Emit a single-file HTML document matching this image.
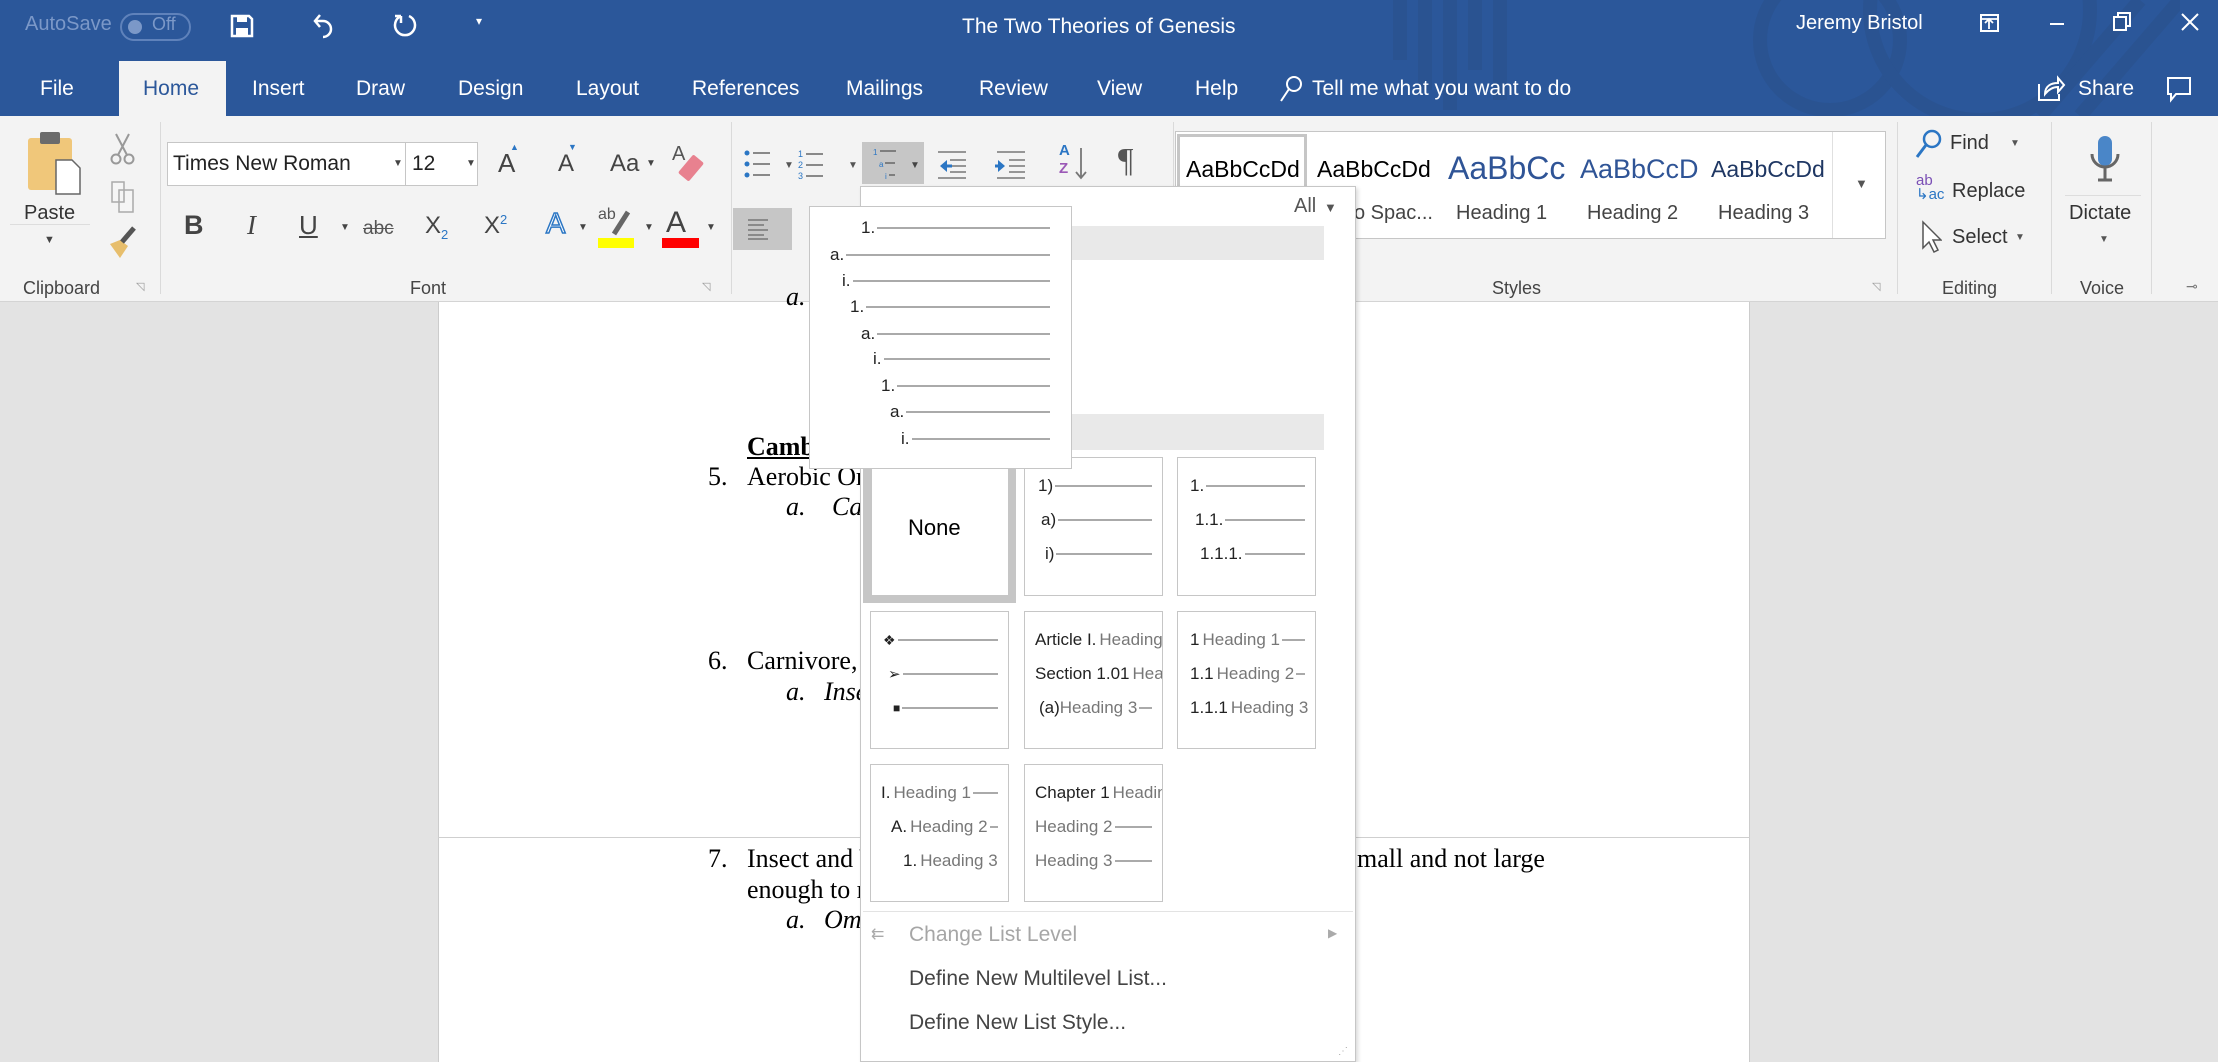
<!DOCTYPE html>
<html><head><meta charset="utf-8"><style>
*{margin:0;padding:0;box-sizing:border-box}
body{width:2218px;height:1062px;overflow:hidden;position:relative;background:#e3e3e3;font-family:"Liberation Sans",sans-serif}
.a{position:absolute;white-space:nowrap}
.tb{color:#fff;font-size:21px}
.rb{color:#333;font-size:20px}
.gl{color:#444;font-size:18px}
.tr{font-family:"Liberation Serif",serif;font-size:26px;color:#000}
.cell{position:absolute;background:#fff;border:1px solid #c6c6c6;overflow:hidden}
.ln{position:absolute;display:flex;align-items:center;font-size:17px;color:#222;right:10px;height:22px;white-space:nowrap}
.ln i{font-style:normal;flex-shrink:0}
.ln b{flex:1;border-bottom:2px solid #aaa;height:0;margin-left:2px;font-weight:normal;min-width:4px}
.g{color:#777}
.sep{position:absolute;top:122px;width:1px;height:172px;background:#dadada}
</style></head><body>
<!-- title bar -->
<div class="a" style="left:0;top:0;width:2218px;height:116px;background:#2b579a"></div>
<svg class="a" style="left:1380px;top:0" width="800" height="116"><g fill="none" stroke="#2a5391" stroke-width="14"><path d="M20 0v60M45 0v90M70 0v110M95 0v70M120 0v100"/><circle cx="450" cy="40" r="70"/><circle cx="600" cy="10" r="110"/><path d="M660 116L760 0M700 116L800 0"/></g></svg>
<div class="a" style="left:25px;top:13px;font-size:20px;color:#7b98c8">AutoSave</div>
<div class="a" style="left:120px;top:13px;width:71px;height:28px;border:2px solid #5f82bb;border-radius:14px"></div>
<div class="a" style="left:128px;top:20px;width:14px;height:14px;border-radius:7px;background:#7b98c8"></div>
<div class="a" style="left:152px;top:14px;font-size:18px;color:#7b98c8">Off</div>
<svg class="a" style="left:230px;top:14px" width="24" height="24"><path d="M2 2h17l3 3v17H2z" fill="none" stroke="#fff" stroke-width="2.5"/><rect x="6" y="14" width="12" height="8" fill="#fff"/><rect x="7" y="2" width="10" height="6" fill="#fff"/></svg>
<svg class="a" style="left:312px;top:12px" width="24" height="28"><path d="M8 3L3 9l5 6M3 9h8a8 8 0 0 1 0 16" fill="none" stroke="#fff" stroke-width="2.5"/></svg>
<svg class="a" style="left:392px;top:12px" width="26" height="28"><path d="M9 4a10 10 0 1 0 8 0M9 4v7M9 4H3" fill="none" stroke="#fff" stroke-width="2.5"/></svg>
<div class="a" style="left:476px;top:14px;font-size:12px;color:#fff">▾</div>
<div class="a tb" style="left:962px;top:15px">The Two Theories of Genesis</div>
<div class="a tb" style="left:1796px;top:12px;font-size:20px">Jeremy Bristol</div>
<svg class="a" style="left:1978px;top:12px" width="120" height="24"><rect x="3" y="3" width="17" height="16" fill="none" stroke="#fff" stroke-width="2"/><path d="M11 17V7M7 11l4-4 4 4M3 7h17" fill="none" stroke="#fff" stroke-width="1.8"/><path d="M72 12h14" stroke="#fff" stroke-width="2"/></svg>
<svg class="a" style="left:2110px;top:10px" width="100" height="26"><rect x="4" y="7" width="12" height="13" fill="none" stroke="#fff" stroke-width="2"/><path d="M8 7V3h12v13h-4" fill="none" stroke="#fff" stroke-width="2"/><path d="M72 4l16 16M88 4L72 20" stroke="#fff" stroke-width="2"/></svg>
<!-- tabs -->
<div class="a" style="left:119px;top:61px;width:107px;height:56px;background:#f3f3f3"></div>
<div class="a tb" style="left:40px;top:77px">File</div>
<div class="a tb" style="left:143px;top:77px;color:#2b579a">Home</div>
<div class="a tb" style="left:252px;top:77px">Insert</div>
<div class="a tb" style="left:356px;top:77px">Draw</div>
<div class="a tb" style="left:458px;top:77px">Design</div>
<div class="a tb" style="left:576px;top:77px">Layout</div>
<div class="a tb" style="left:692px;top:77px">References</div>
<div class="a tb" style="left:846px;top:77px">Mailings</div>
<div class="a tb" style="left:979px;top:77px">Review</div>
<div class="a tb" style="left:1097px;top:77px">View</div>
<div class="a tb" style="left:1195px;top:77px">Help</div>
<svg class="a" style="left:1278px;top:74px" width="26" height="30"><circle cx="16" cy="10" r="7" fill="none" stroke="#fff" stroke-width="2"/><path d="M11 15L3 27" stroke="#fff" stroke-width="2"/></svg>
<div class="a tb" style="left:1312px;top:77px">Tell me what you want to do</div>
<svg class="a" style="left:2036px;top:74px" width="30" height="30"><path d="M3 10v16h20v-6" fill="none" stroke="#fff" stroke-width="2"/><path d="M9 20c0-8 6-11 13-11V4l6 7-6 7v-5c-5 0-9 2-13 7z" fill="none" stroke="#fff" stroke-width="2"/></svg>
<div class="a tb" style="left:2078px;top:77px">Share</div>
<svg class="a" style="left:2166px;top:76px" width="26" height="28"><path d="M2 2h22v16H10l-5 6v-6H2z" fill="none" stroke="#fff" stroke-width="2"/></svg>
<!-- ribbon -->
<div class="a" style="left:0;top:116px;width:2218px;height:186px;background:#f3f3f3;border-bottom:1px solid #d4d4d4"></div>
<div class="sep" style="left:160px"></div><div class="sep" style="left:731px"></div><div class="sep" style="left:1173px"></div><div class="sep" style="left:1897px"></div><div class="sep" style="left:2051px"></div><div class="sep" style="left:2151px"></div>
<!-- clipboard -->
<svg class="a" style="left:26px;top:130px" width="58" height="66"><rect x="2" y="8" width="44" height="52" rx="3" fill="#f0c77a"/><rect x="14" y="2" width="20" height="12" rx="2" fill="#6b6b6b"/><path d="M30 30h16l8 8v26H30z" fill="#fff" stroke="#666" stroke-width="1.5"/></svg>
<div class="a" style="left:10px;top:224px;width:80px;height:1px;background:#ddd"></div>
<div class="a rb" style="left:24px;top:202px">Paste</div>
<div class="a" style="left:44px;top:234px;font-size:11px;color:#444">▼</div>
<svg class="a" style="left:110px;top:132px" width="26" height="34"><circle cx="6" cy="27" r="4.5" fill="none" stroke="#999" stroke-width="2"/><circle cx="19" cy="27" r="4.5" fill="none" stroke="#999" stroke-width="2"/><path d="M8 23L19 2M17 23L6 2" stroke="#999" stroke-width="2"/></svg>
<svg class="a" style="left:110px;top:180px" width="26" height="34"><path d="M2 2h12v20H2zM9 10h14v22H9z" fill="#f5f5f5" stroke="#aaa" stroke-width="1.5"/></svg>
<svg class="a" style="left:108px;top:226px" width="30" height="34"><path d="M2 18l10 14 8-12-8-6z" fill="#e7be6c"/><path d="M14 16l12-14" stroke="#555" stroke-width="5"/></svg>
<div class="a gl" style="left:23px;top:278px">Clipboard</div>
<div class="a" style="left:136px;top:280px;font-size:11px;color:#999">◹</div>
<!-- font -->
<div class="a" style="left:167px;top:142px;width:239px;height:44px;background:#fff;border:1px solid #c6c6c6"></div>
<div class="a" style="left:406px;top:142px;width:72px;height:44px;background:#fff;border:1px solid #c6c6c6;border-left:none"></div>
<div class="a" style="left:173px;top:152px;font-size:21px;color:#222">Times New Roman</div>
<div class="a" style="left:393px;top:158px;font-size:10px;color:#444">▼</div>
<div class="a" style="left:412px;top:152px;font-size:21px;color:#222">12</div>
<div class="a" style="left:466px;top:158px;font-size:10px;color:#444">▼</div>
<div class="a" style="left:498px;top:148px;font-size:26px;color:#444">A</div><div class="a" style="left:510px;top:142px;font-size:9px;color:#2b76c4">▲</div>
<div class="a" style="left:558px;top:150px;font-size:24px;color:#444">A</div><div class="a" style="left:568px;top:142px;font-size:9px;color:#2b76c4">▼</div>
<div class="a" style="left:610px;top:150px;font-size:24px;color:#444">Aa</div><div class="a" style="left:646px;top:158px;font-size:10px;color:#444">▼</div>
<svg class="a" style="left:672px;top:142px" width="34" height="44"><text x="0" y="18" font-size="20" fill="#555" font-family="Liberation Sans">A</text><rect x="12" y="14" width="14" height="24" rx="2" transform="rotate(40 19 26)" fill="#e8818f"/></svg>
<div class="a" style="left:184px;top:210px;font-size:27px;font-weight:bold;color:#444">B</div>
<div class="a" style="left:247px;top:210px;font-size:27px;font-style:italic;font-family:'Liberation Serif',serif;color:#444">I</div>
<div class="a" style="left:299px;top:210px;font-size:26px;color:#444;text-decoration:underline">U</div><div class="a" style="left:340px;top:222px;font-size:10px;color:#444">▼</div>
<div class="a" style="left:363px;top:218px;font-size:19px;color:#555;text-decoration:line-through">abc</div>
<div class="a" style="left:425px;top:212px;font-size:24px;color:#444">X<sub style="font-size:13px;color:#2b76c4">2</sub></div>
<div class="a" style="left:484px;top:212px;font-size:24px;color:#444">X<sup style="font-size:13px;color:#2b76c4">2</sup></div>
<div class="a" style="left:546px;top:208px;font-size:29px;color:#fff;-webkit-text-stroke:1.5px #2b76c4">A</div><div class="a" style="left:578px;top:222px;font-size:10px;color:#444">▼</div>
<div class="a" style="left:598px;top:206px;font-size:16px;color:#555">ab</div>
<svg class="a" style="left:608px;top:208px" width="24" height="30"><path d="M6 26L20 4" stroke="#666" stroke-width="5"/></svg>
<div class="a" style="left:598px;top:238px;width:36px;height:10px;background:#ffff00"></div><div class="a" style="left:644px;top:222px;font-size:10px;color:#444">▼</div>
<div class="a" style="left:666px;top:206px;font-size:30px;color:#444">A</div>
<div class="a" style="left:662px;top:238px;width:37px;height:10px;background:#f00"></div><div class="a" style="left:706px;top:222px;font-size:10px;color:#444">▼</div>
<div class="a gl" style="left:410px;top:278px">Font</div>
<div class="a" style="left:702px;top:280px;font-size:11px;color:#999">◹</div>
<!-- paragraph -->
<svg class="a" style="left:742px;top:148px" width="110" height="34"><g fill="#2b76c4"><circle cx="5" cy="5" r="2.5"/><circle cx="5" cy="16" r="2.5"/><circle cx="5" cy="27" r="2.5"/></g><path d="M11 5h17M11 16h17M11 27h17" stroke="#666" stroke-width="1.5"/><text x="56" y="9" font-size="9" fill="#2b76c4" font-family="Liberation Sans">1</text><text x="56" y="20" font-size="9" fill="#2b76c4" font-family="Liberation Sans">2</text><text x="56" y="31" font-size="9" fill="#2b76c4" font-family="Liberation Sans">3</text><path d="M64 6h17M64 17h17M64 28h17" stroke="#666" stroke-width="1.5"/></svg>
<div class="a" style="left:784px;top:160px;font-size:10px;color:#555">▼</div>
<div class="a" style="left:848px;top:160px;font-size:10px;color:#555">▼</div>
<div class="a" style="left:862px;top:142px;width:62px;height:42px;background:#c6c6c6"></div>
<svg class="a" style="left:870px;top:146px" width="36" height="36"><text x="3" y="9" font-size="8" fill="#2b76c4" font-family="Liberation Sans">1</text><text x="9" y="21" font-size="8" fill="#2b76c4" font-family="Liberation Sans">a</text><text x="15" y="33" font-size="8" fill="#2b76c4" font-family="Liberation Sans">i</text><path d="M10 5h16M15 17h10M19 29h6" stroke="#666" stroke-width="1.5"/></svg>
<div class="a" style="left:910px;top:160px;font-size:10px;color:#444">▼</div>
<svg class="a" style="left:938px;top:150px" width="110" height="30"><path d="M0 2h28M12 10h16M12 16h16M12 22h16M0 28h28" stroke="#777" stroke-width="1.5"/><path d="M2 16l7-6v12z" fill="#2b76c4"/><path d="M9 16h5" stroke="#2b76c4" stroke-width="3"/><path d="M59 2h28M71 10h16M71 16h16M71 22h16M59 28h28" stroke="#777" stroke-width="1.5"/><path d="M67 16l-7-6v12z" fill="#2b76c4"/><path d="M57 16h5" stroke="#2b76c4" stroke-width="3"/></svg>
<div class="a" style="left:1059px;top:142px;font-size:15px;color:#2b76c4;font-weight:bold">A</div><div class="a" style="left:1059px;top:160px;font-size:15px;color:#9b59b6;font-weight:bold">Z</div>
<svg class="a" style="left:1074px;top:146px" width="14" height="36"><path d="M7 2v30M2 26l5 6 5-6" fill="none" stroke="#777" stroke-width="1.8"/></svg>
<div class="a" style="left:1118px;top:142px;font-size:34px;color:#555;font-family:'Liberation Serif',serif">¶</div>
<div class="a" style="left:733px;top:208px;width:59px;height:42px;background:#c6c6c6"></div>
<svg class="a" style="left:748px;top:218px" width="30" height="22"><path d="M0 2h20M0 7h16M0 12h20M0 17h16M0 21h20" stroke="#666" stroke-width="1.3"/></svg>
<!-- styles -->
<div class="a" style="left:1175px;top:131px;width:711px;height:108px;background:#fff;border:1px solid #c6c6c6"></div>
<div class="a" style="left:1177px;top:134px;width:130px;height:104px;border:3px solid #c6c6c6;border-bottom:none"></div>
<div class="a" style="left:1832px;top:132px;width:1px;height:106px;background:#e0e0e0"></div>
<div class="a" style="left:1855px;top:176px;font-size:13px;color:#555">▼</div>
<div class="a" style="left:1186px;top:156px;font-size:23px;color:#000">AaBbCcDd</div>
<div class="a" style="left:1317px;top:156px;font-size:23px;color:#000">AaBbCcDd</div>
<div class="a" style="left:1448px;top:150px;font-size:32px;color:#2f5496;width:126px;overflow:hidden">AaBbCc</div>
<div class="a" style="left:1580px;top:154px;font-size:27px;color:#2f5496;width:124px;overflow:hidden">AaBbCcD</div>
<div class="a" style="left:1711px;top:156px;font-size:23px;color:#1f3763;width:118px;overflow:hidden">AaBbCcDd</div>
<div class="a" style="left:1354px;top:202px;font-size:20px;color:#444">o Spac...</div>
<div class="a" style="left:1456px;top:202px;font-size:20px;color:#444">Heading 1</div>
<div class="a" style="left:1587px;top:202px;font-size:20px;color:#444">Heading 2</div>
<div class="a" style="left:1718px;top:202px;font-size:20px;color:#444">Heading 3</div>
<div class="a gl" style="left:1492px;top:278px">Styles</div>
<div class="a" style="left:1872px;top:280px;font-size:11px;color:#999">◹</div>
<!-- editing -->
<svg class="a" style="left:1914px;top:128px" width="30" height="32"><circle cx="18" cy="11" r="8" fill="none" stroke="#2b76c4" stroke-width="2.5"/><path d="M12 17L3 29" stroke="#2b76c4" stroke-width="3"/></svg>
<div class="a rb" style="left:1950px;top:132px">Find</div><div class="a" style="left:2010px;top:138px;font-size:10px;color:#555">▼</div>
<div class="a" style="left:1916px;top:174px;font-size:15px;color:#7a4fb5;line-height:14px">ab<br><span style="color:#2b76c4">↳ac</span></div>
<div class="a rb" style="left:1952px;top:180px">Replace</div>
<svg class="a" style="left:1920px;top:220px" width="22" height="34"><path d="M3 2v26l6-6 5 10 4-2-5-10h8z" fill="#fff" stroke="#555" stroke-width="1.5"/></svg>
<div class="a rb" style="left:1952px;top:226px">Select</div><div class="a" style="left:2015px;top:232px;font-size:10px;color:#555">▼</div>
<div class="a gl" style="left:1942px;top:278px">Editing</div>
<!-- voice -->
<svg class="a" style="left:2088px;top:134px" width="34" height="54"><rect x="10" y="2" width="14" height="30" rx="7" fill="#4a86c8"/><path d="M4 20a13 13 0 0 0 26 0M17 33v12M10 46h14" fill="none" stroke="#666" stroke-width="3"/></svg>
<div class="a" style="left:2065px;top:195px;width:76px;height:1px;background:#ddd"></div>
<div class="a rb" style="left:2069px;top:202px">Dictate</div>
<div class="a" style="left:2099px;top:234px;font-size:10px;color:#555">▼</div>
<div class="a gl" style="left:2080px;top:278px">Voice</div>
<div class="a" style="left:2186px;top:278px;font-size:14px;color:#777">⊸</div>
<!-- document -->
<div class="a" style="left:438px;top:302px;width:1312px;height:760px;background:#fff;border-left:1px solid #ccc;border-right:1px solid #ccc"></div>
<div class="a" style="left:438px;top:837px;width:1312px;height:1px;background:#cfcfcf"></div>
<div class="a tr" style="left:786px;top:282px;font-style:italic">a.</div>
<div class="a tr" style="left:747px;top:432px;font-weight:bold;text-decoration:underline">Cambrian</div>
<div class="a tr" style="left:708px;top:462px">5.</div><div class="a tr" style="left:747px;top:462px">Aerobic Organisms</div>
<div class="a tr" style="left:786px;top:492px;font-style:italic">a.</div><div class="a tr" style="left:832px;top:492px;font-style:italic">Carnivores</div>
<div class="a tr" style="left:708px;top:646px">6.</div><div class="a tr" style="left:747px;top:646px">Carnivore, and more</div>
<div class="a tr" style="left:786px;top:677px;font-style:italic">a.</div><div class="a tr" style="left:824px;top:677px;font-style:italic">Insects</div>
<div class="a tr" style="left:708px;top:844px">7.</div><div class="a tr" style="left:747px;top:844px">Insect and Vertebrates were small and not large</div>
<div class="a tr" style="left:1357px;top:844px;background:#fff">mall and not large</div>
<div class="a tr" style="left:747px;top:875px">enough to reach</div>
<div class="a tr" style="left:786px;top:905px;font-style:italic">a.</div><div class="a tr" style="left:824px;top:905px;font-style:italic">Omnivores</div>
<!-- dropdown panel -->
<div class="a" style="left:860px;top:186px;width:496px;height:876px;background:#fff;border:1px solid #c6c6c6;box-shadow:2px 2px 4px rgba(0,0,0,.15)"></div>
<div class="a" style="left:1294px;top:195px;font-size:20px;color:#555">All</div><div class="a" style="left:1324px;top:200px;font-size:13px;color:#555">▼</div>
<div class="a" style="left:863px;top:226px;width:461px;height:34px;background:#e9e9e9"></div>
<div class="a" style="left:863px;top:414px;width:461px;height:36px;background:#e9e9e9"></div>
<div class="a" style="left:863px;top:460px;width:153px;height:143px;background:#c6c6c6"></div>
<div class="cell" style="left:871px;top:464px;width:138px;height:132px"><div class="a" style="left:36px;top:50px;font-size:22px;color:#000">None</div></div>
<div class="cell" style="left:1024px;top:457px;width:139px;height:139px">
<div class="ln" style="left:13px;top:17px"><i>1)</i><b></b></div>
<div class="ln" style="left:16px;top:51px"><i>a)</i><b></b></div>
<div class="ln" style="left:20px;top:85px"><i>i)</i><b></b></div></div>
<div class="cell" style="left:1177px;top:457px;width:139px;height:139px">
<div class="ln" style="left:12px;top:17px"><i>1.</i><b></b></div>
<div class="ln" style="left:17px;top:51px"><i>1.1.</i><b></b></div>
<div class="ln" style="left:22px;top:85px"><i>1.1.1.</i><b></b></div></div>
<div class="cell" style="left:870px;top:611px;width:139px;height:138px">
<div class="ln" style="left:12px;top:17px"><i style="font-size:14px">❖</i><b></b></div>
<div class="ln" style="left:17px;top:51px"><i style="font-size:15px">➢</i><b></b></div>
<div class="ln" style="left:22px;top:85px"><i style="font-size:12px">■</i><b></b></div></div>
<div class="cell" style="left:1024px;top:611px;width:139px;height:138px">
<div class="ln" style="left:10px;top:17px;right:auto"><i>Article I.</i><i class="g" style="margin-left:3px">Heading</i></div>
<div class="ln" style="left:10px;top:51px;right:auto"><i>Section 1.01</i><i class="g" style="margin-left:3px">Heading</i></div>
<div class="ln" style="left:14px;top:85px"><i>(a)</i><i class="g">Heading 3</i><b></b></div></div>
<div class="cell" style="left:1177px;top:611px;width:139px;height:138px">
<div class="ln" style="left:12px;top:17px"><i>1</i><i class="g" style="margin-left:3px">Heading 1</i><b></b></div>
<div class="ln" style="left:12px;top:51px"><i>1.1</i><i class="g" style="margin-left:3px">Heading 2</i><b></b></div>
<div class="ln" style="left:12px;top:85px;right:auto"><i>1.1.1</i><i class="g" style="margin-left:3px">Heading 3</i></div></div>
<div class="cell" style="left:870px;top:764px;width:139px;height:138px">
<div class="ln" style="left:10px;top:17px"><i>I.</i><i class="g" style="margin-left:3px">Heading 1</i><b></b></div>
<div class="ln" style="left:20px;top:51px"><i>A.</i><i class="g" style="margin-left:3px">Heading 2</i><b></b></div>
<div class="ln" style="left:32px;top:85px;right:auto"><i>1.</i><i class="g" style="margin-left:3px">Heading 3</i></div></div>
<div class="cell" style="left:1024px;top:764px;width:139px;height:138px">
<div class="ln" style="left:10px;top:17px;right:auto"><i>Chapter 1</i><i class="g" style="margin-left:3px">Heading</i></div>
<div class="ln" style="left:10px;top:51px"><i class="g">Heading 2</i><b></b></div>
<div class="ln" style="left:10px;top:85px"><i class="g">Heading 3</i><b></b></div></div>
<div class="a" style="left:863px;top:911px;width:490px;height:1px;background:#e3e3e3"></div>
<div class="a" style="left:871px;top:924px;font-size:16px;color:#aaa">⇇</div>
<div class="a" style="left:909px;top:923px;font-size:21px;color:#a6a6a6">Change List Level</div>
<div class="a" style="left:1328px;top:926px;font-size:12px;color:#aaa">▶</div>
<div class="a" style="left:909px;top:967px;font-size:21px;color:#444">Define New Multilevel List...</div>
<div class="a" style="left:909px;top:1011px;font-size:21px;color:#444">Define New List Style...</div>
<div class="a" style="left:1338px;top:1046px;font-size:10px;color:#aaa">⋰</div>
<!-- hover preview popup -->
<div class="a" style="left:809px;top:206px;width:263px;height:263px;background:#fff;border:1px solid #c6c6c6"></div>
<div class="ln" style="left:861px;top:217px;right:1168px"><i>1.</i><b></b></div>
<div class="ln" style="left:830px;top:244px;right:1168px"><i>a.</i><b></b></div>
<div class="ln" style="left:842px;top:270px;right:1168px"><i>i.</i><b></b></div>
<div class="ln" style="left:850px;top:296px;right:1168px"><i>1.</i><b></b></div>
<div class="ln" style="left:861px;top:323px;right:1168px"><i>a.</i><b></b></div>
<div class="ln" style="left:873px;top:348px;right:1168px"><i>i.</i><b></b></div>
<div class="ln" style="left:881px;top:375px;right:1168px"><i>1.</i><b></b></div>
<div class="ln" style="left:890px;top:401px;right:1168px"><i>a.</i><b></b></div>
<div class="ln" style="left:901px;top:428px;right:1168px"><i>i.</i><b></b></div>
</body></html>
